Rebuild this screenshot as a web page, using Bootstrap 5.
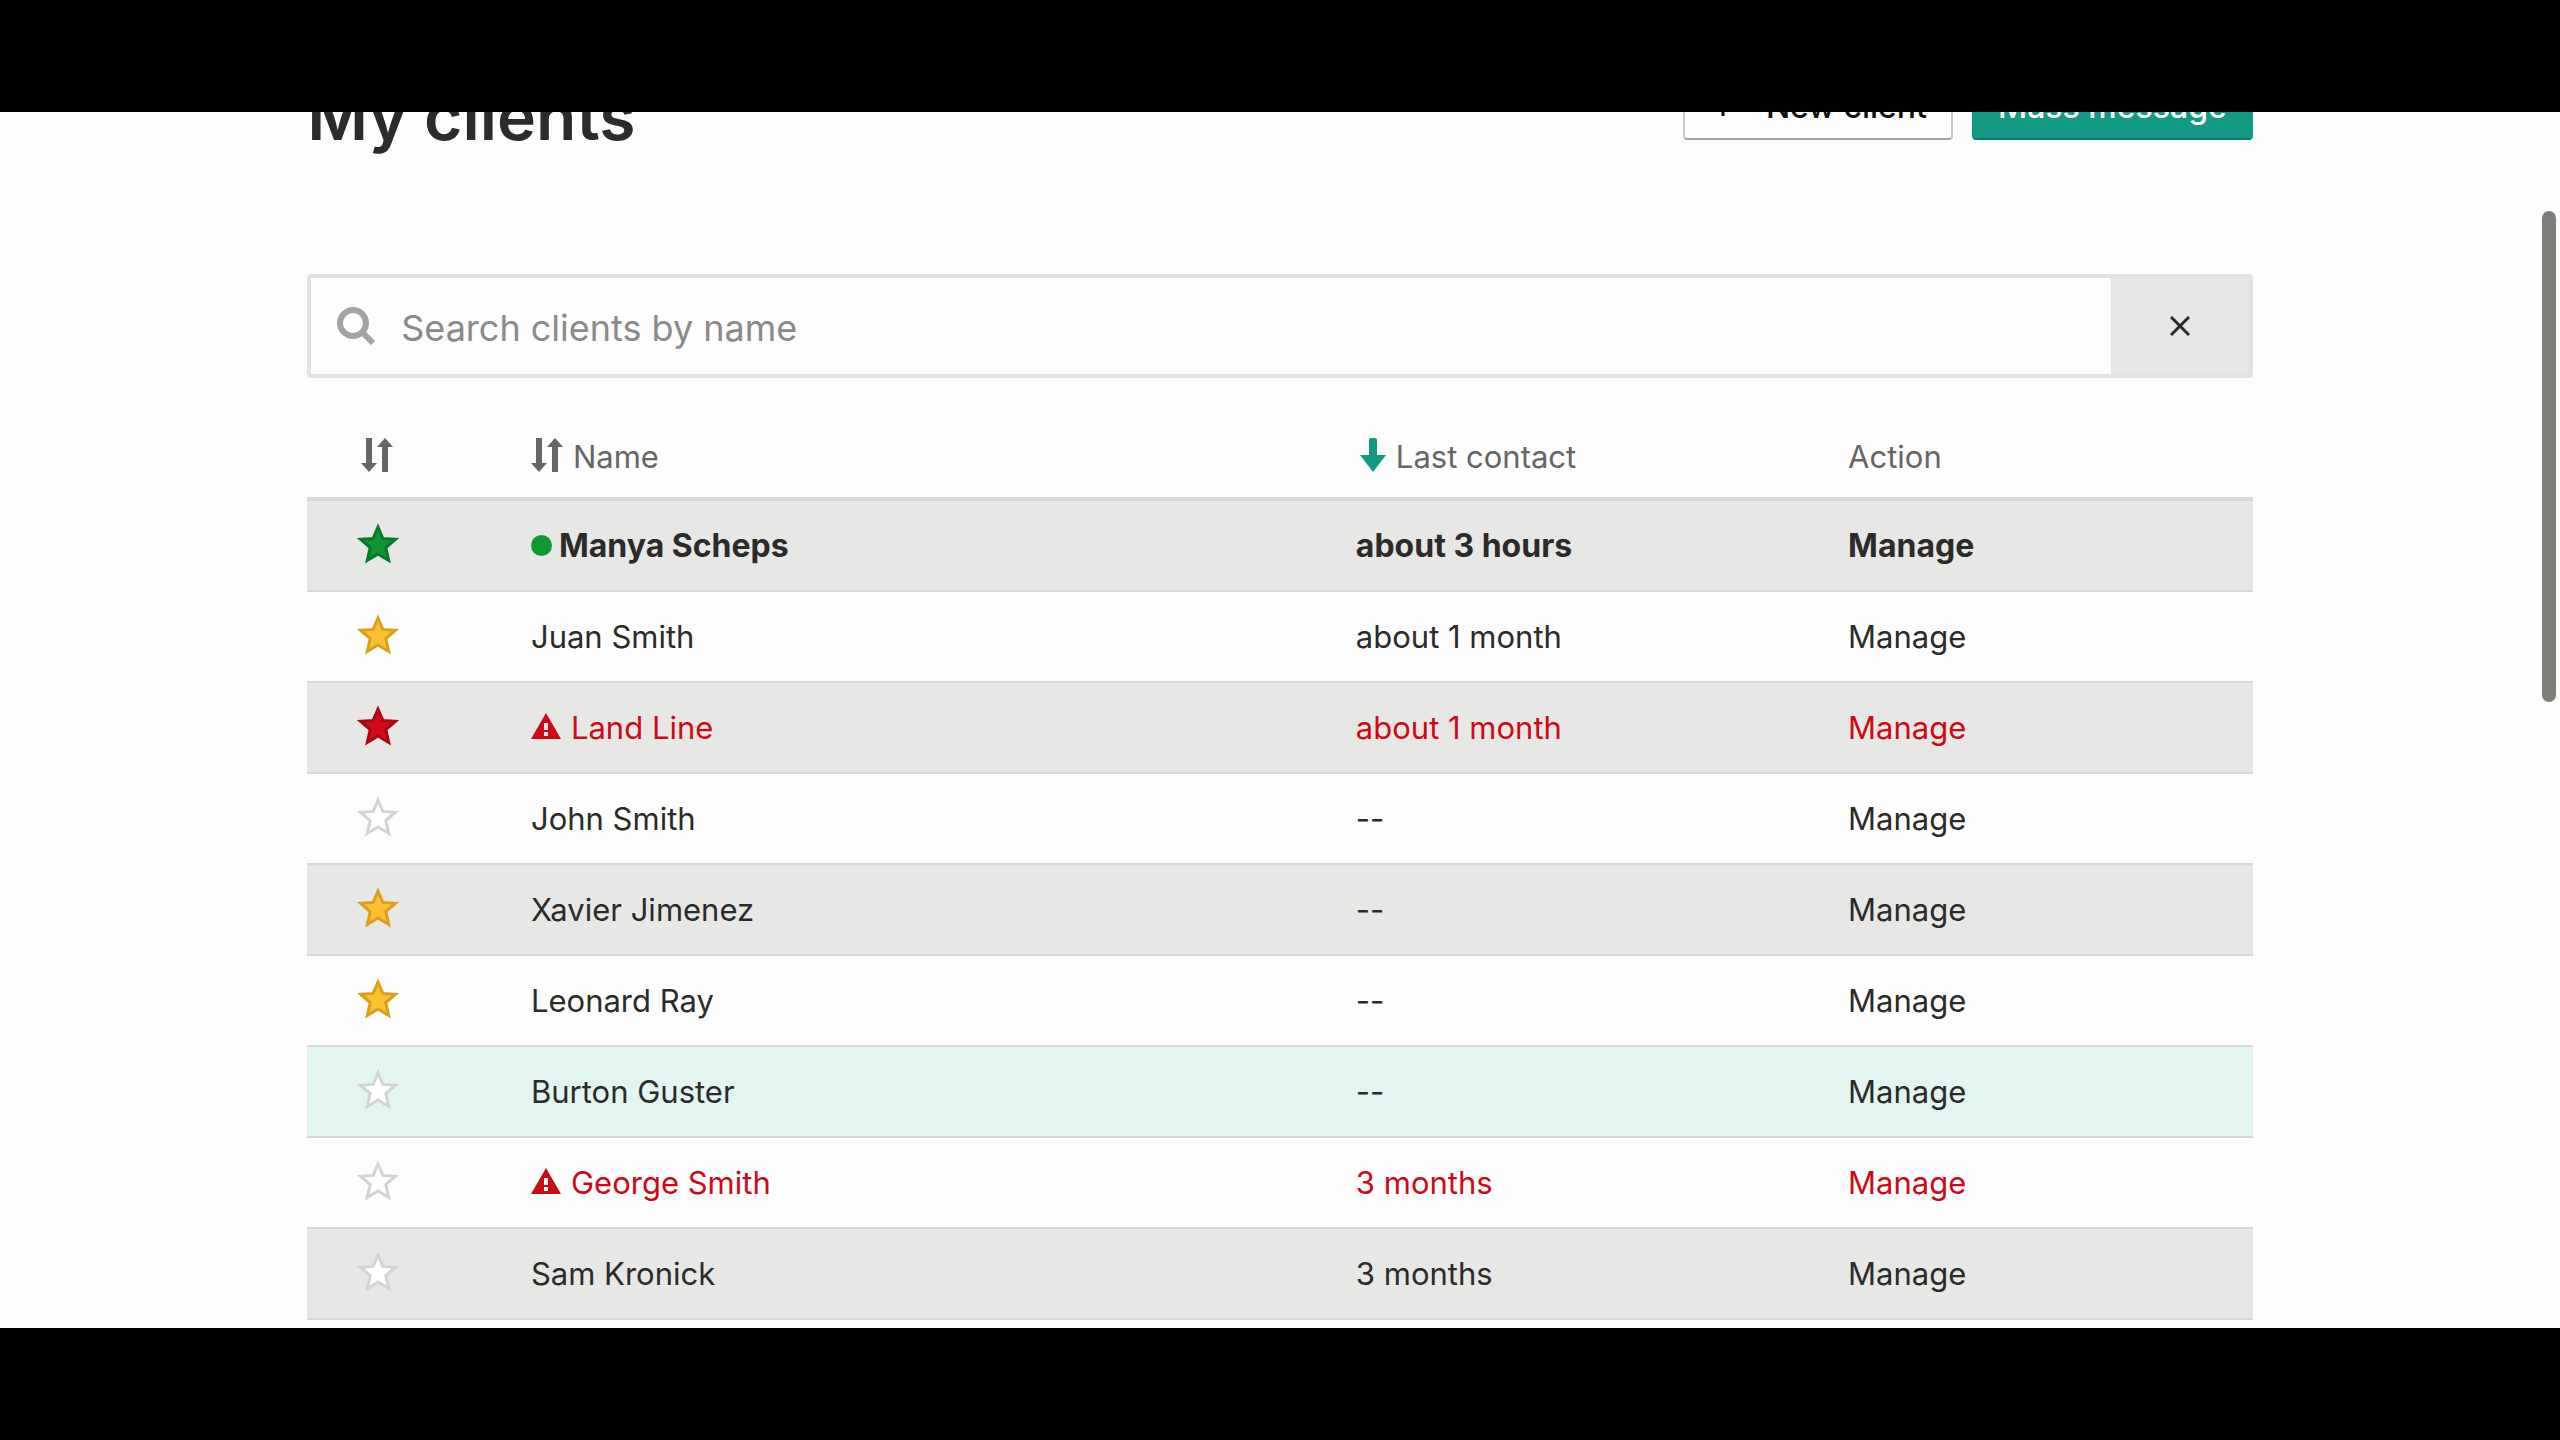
<!DOCTYPE html>
<html lang="en">
<head>
<meta charset="utf-8">
<meta name="viewport" content="width=device-width, initial-scale=1">
<title>My clients</title>
<link href="https://cdn.jsdelivr.net/npm/bootstrap@5.3.0/dist/css/bootstrap.min.css" rel="stylesheet">
<style>
  body { font-family: Inter, "Liberation Sans", sans-serif; font-size: 31px; line-height: 40px; color: #2b2b29; background: #000; }
  .screen { background: #fdfdfd; margin: 112px 0; }
  .page-body { width: 76%; margin: -42px auto 0; }
  .page-title { font-size: 66px; line-height: 78px; font-weight: 600; margin: 7px 0 0; }
  .top-btn { height: 70px; padding: 4px 24px 0; font-size: 32px; line-height: 40px; font-weight: 500; border-radius: 4px; border-width: 2px; }
  .btn-new { --bs-btn-color: #111; --bs-btn-border-color: #c9c9c7; border-bottom-color: #a5a5a3; padding-left: 29px; gap: 34px; }
  .btn-mass { --bs-btn-color: #fff; --bs-btn-bg: #139a83; --bs-btn-border-color: #139a83; border-bottom-color: #0c7a68; }
  .btn-group-top { gap: 19px; }
  .search-bar { height: 104px; margin: 119px 0 59px; border: 4px solid #e2e2e2; border-radius: 4px; }
  .search-bar label { padding: 0 25px 0 26px; }
  .search-bar .form-control { font-size: 36px; line-height: 48px; color: #2b2b29; }
  .search-bar .form-control::placeholder { color: #8a8a88; opacity: 1; }
  .clear-btn { width: 138px; flex: none; background: #e6e6e5; border-radius: 0; }
  .clients { table-layout: fixed; width: 100%; border-collapse: separate; border-spacing: 0; white-space: nowrap; }
  .clients th { height: 64px; padding: 0 0 20px; border-bottom: 4px solid #d8d8d6; font-weight: 400; color: #666664; }
  .clients td { height: 91px; padding: 0; border-bottom: 2px solid #d8d8d6; vertical-align: middle; }
  .clients .star-col { width: 11.5%; padding-left: 50px; }
  .name-col { width: 42.4%; }
  .contact-col { width: 25.3%; }
  .clients tbody tr:nth-child(odd) { background: #e7e7e6; }
  .clients tbody tr.is-active { background: #e2f5f0; }
  .clients a { color: inherit; text-decoration: none; }
  .is-unread { font-weight: 700; font-size: 32px; }
  .is-error { color: #cc0a16; }
  .clients svg, .top-btn svg, .search-bar svg { display: block; flex: none; }
  .clients svg { margin-bottom: 4px; }
  .star-btn, .sort-btn { padding: 0; border: 0; background: none; color: inherit; display: flex; align-items: center; }
  .star { fill: #fff; stroke: #d3d3d3; stroke-width: 3; }
  .star-green { fill: #0f9632; stroke: #08792a; }
  .star-gold { fill: #fdc02f; stroke: #d9a01f; }
  .star-red { fill: #d50a18; stroke: #a90812; }
  .dot { width: 21px; height: 21px; border-radius: 50%; background: #0f9a30; margin-right: 7px; }
  .icon-gap { gap: 10px; }
  .scroll-thumb { position: absolute; top: 211px; right: 4px; width: 14px; height: 491px; border-radius: 7px; background: #7d7d7a; }
</style>
</head>
<body class="vh-100 d-flex flex-column overflow-hidden">
<svg width="0" height="0" class="position-absolute" aria-hidden="true">
  <symbol id="star" viewBox="0 0 42 42"><path d="M21 4 L25.8 15.4 L38.5 16.2 L28.8 24.6 L31.7 37.5 L21 31 L10.3 37.5 L13.2 24.6 L3.5 16.2 L16.2 15.4 Z"/></symbol>
  <symbol id="sort" viewBox="0 0 32 34"><path fill="currentColor" d="M5 0h6v25h5L8 34 0 25h5z M24 0l8 9h-5v25h-6V9h-5z"/></symbol>
  <symbol id="warn" viewBox="0 0 30 26"><path fill="currentColor" fill-rule="evenodd" d="M15 0 30 26H0z M13 10v7h4v-7z M13 19v4h4v-4z"/></symbol>
</svg>
<main class="screen flex-grow-1 overflow-hidden">
  <div class="page-body">
    <header class="d-flex justify-content-between align-items-start">
      <h1 class="page-title">My clients</h1>
      <div class="d-flex btn-group-top">
        <button type="button" class="btn btn-new top-btn d-flex align-items-center"><svg width="18" height="18" viewBox="0 0 18 18" aria-hidden="true"><path d="M9 0v18M0 9h18" stroke="currentColor" stroke-width="3"/></svg>New client</button>
        <button type="button" class="btn btn-mass top-btn">Mass message</button>
      </div>
    </header>
    <form class="search-bar d-flex align-items-stretch">
      <label for="search" class="d-flex align-items-center"><svg width="39" height="39" viewBox="0 0 39 39" role="img" aria-label="Search"><circle cx="16" cy="16" r="13" fill="none" stroke="#a3a3a2" stroke-width="6"/><path d="M25 25l11 11" stroke="#a3a3a2" stroke-width="6"/></svg></label>
      <input id="search" type="text" class="form-control border-0 p-0 pt-1 bg-transparent shadow-none" placeholder="Search clients by name">
      <button type="reset" class="btn clear-btn d-flex align-items-center justify-content-center p-0" aria-label="Clear"><svg width="20" height="20" viewBox="0 0 20 20"><path d="M1 1l18 18M19 1L1 19" stroke="#2b2b29" stroke-width="3"/></svg></button>
    </form>
    <table class="clients">
      <thead>
        <tr>
          <th class="star-col" scope="col"><button type="button" class="sort-btn ms-1" aria-label="Sort by status"><svg width="32" height="34"><use href="#sort"/></svg></button></th>
          <th class="name-col" scope="col"><button type="button" class="sort-btn icon-gap"><svg width="32" height="34"><use href="#sort"/></svg>Name</button></th>
          <th class="contact-col" scope="col"><button type="button" class="sort-btn icon-gap ps-1"><svg width="26" height="34" viewBox="0 0 26 34"><path fill="#139a83" d="M9 2q0-2 2-2h4q2 0 2 2v15h9L13 34 0 17h9z"/></svg>Last contact</button></th>
          <th scope="col">Action</th>
        </tr>
      </thead>
      <tbody>
        <tr class="is-unread"><td class="star-col"><button type="button" class="star-btn" aria-label="Status"><svg class="star star-green" width="42" height="42"><use href="#star"/></svg></button></td><td><div class="d-flex align-items-center"><span class="dot"></span><a href="#">Manya Scheps</a></div></td><td>about 3 hours</td><td><a href="#">Manage</a></td></tr>
        <tr><td class="star-col"><button type="button" class="star-btn" aria-label="Status"><svg class="star star-gold" width="42" height="42"><use href="#star"/></svg></button></td><td><a href="#">Juan Smith</a></td><td>about 1 month</td><td><a href="#">Manage</a></td></tr>
        <tr class="is-error"><td class="star-col"><button type="button" class="star-btn" aria-label="Status"><svg class="star star-red" width="42" height="42"><use href="#star"/></svg></button></td><td><div class="d-flex align-items-center icon-gap"><svg width="30" height="26"><use href="#warn"/></svg><a href="#">Land Line</a></div></td><td>about 1 month</td><td><a href="#">Manage</a></td></tr>
        <tr><td class="star-col"><button type="button" class="star-btn" aria-label="Status"><svg class="star" width="42" height="42"><use href="#star"/></svg></button></td><td><a href="#">John Smith</a></td><td>--</td><td><a href="#">Manage</a></td></tr>
        <tr><td class="star-col"><button type="button" class="star-btn" aria-label="Status"><svg class="star star-gold" width="42" height="42"><use href="#star"/></svg></button></td><td><a href="#">Xavier Jimenez</a></td><td>--</td><td><a href="#">Manage</a></td></tr>
        <tr><td class="star-col"><button type="button" class="star-btn" aria-label="Status"><svg class="star star-gold" width="42" height="42"><use href="#star"/></svg></button></td><td><a href="#">Leonard Ray</a></td><td>--</td><td><a href="#">Manage</a></td></tr>
        <tr class="is-active"><td class="star-col"><button type="button" class="star-btn" aria-label="Status"><svg class="star" width="42" height="42"><use href="#star"/></svg></button></td><td><a href="#">Burton Guster</a></td><td>--</td><td><a href="#">Manage</a></td></tr>
        <tr class="is-error"><td class="star-col"><button type="button" class="star-btn" aria-label="Status"><svg class="star" width="42" height="42"><use href="#star"/></svg></button></td><td><div class="d-flex align-items-center icon-gap"><svg width="30" height="26"><use href="#warn"/></svg><a href="#">George Smith</a></div></td><td>3 months</td><td><a href="#">Manage</a></td></tr>
        <tr><td class="star-col"><button type="button" class="star-btn" aria-label="Status"><svg class="star" width="42" height="42"><use href="#star"/></svg></button></td><td><a href="#">Sam Kronick</a></td><td>3 months</td><td><a href="#">Manage</a></td></tr>
      </tbody>
    </table>
  </div>
</main>
<div class="scroll-thumb"></div>
<script src="https://cdn.jsdelivr.net/npm/bootstrap@5.3.0/dist/js/bootstrap.bundle.min.js"></script>
</body>
</html>
